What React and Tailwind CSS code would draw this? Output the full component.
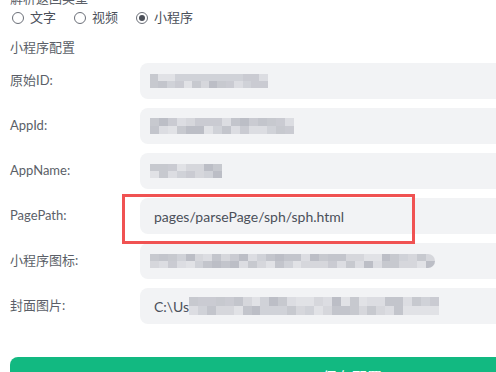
import React from "react";

function Blur({ w, rows = 2, seed = 1, cell = 9, h = 7, round = false }) {
  const shades = ["#c3c5cc", "#d0d2d8", "#dcdde2", "#e1e2e6", "#cacbd2", "#bcbec6", "#d6d7dc", "#c7c9cf"];
  const cols = Math.ceil(w / cell);
  const out = [];
  let s = seed * 7919 + 17;
  for (let r = 0; r < rows; r++) {
    const row = [];
    for (let c = 0; c < cols; c++) {
      s = (s * 1103515245 + 12345) & 0x7fffffff;
      row.push(shades[(s >> 16) % shades.length]);
    }
    out.push(row);
  }
  return (
    <div className={"flex flex-col overflow-hidden " + (round ? "rounded-r-full" : "")} style={{ width: w }}>
      {out.map((row, i) => (
        <div key={i} className="flex">
          {row.map((col, j) => (
            <div key={j} style={{ width: cell, height: h, background: col }} />
          ))}
        </div>
      ))}
    </div>
  );
}

function Row({ label, children }) {
  return (
    <div className="flex items-center h-[36px]">
      <div className="w-[130px] text-[13px] text-[#5b5f68]">{label}</div>
      <div className="flex-1 h-[36px] rounded-[8px] bg-[#f2f3f5] flex items-center pl-[10px] text-[14px] text-[#4b505a]">
        {children}
      </div>
    </div>
  );
}

function Radio({ checked, label }) {
  return (
    <div className="flex items-center gap-[6px]">
      <div className="w-[12px] h-[12px] rounded-full border border-[#6b6f78] flex items-center justify-center">
        {checked && <div className="w-[6px] h-[6px] rounded-full bg-[#4b4f58]" />}
      </div>
      <span>{label}</span>
    </div>
  );
}

export default function App() {
  return (
    <div
      className="w-[496px] h-[372px] overflow-hidden bg-white relative"
      style={{ fontFamily: "Lato, 'Noto Sans CJK SC', sans-serif" }}
    >
      <div className="w-[704px] px-[10px]">
        <div className="mt-[-10px] h-[16px] leading-[16px] text-[13px] text-[#5b5f68]">解析返回类型</div>
        <div className="mt-[2px] h-[20px] flex items-center gap-[18px] text-[13px] text-[#4b505a] pl-[2px]">
          <Radio label="文字" />
          <Radio label="视频" />
          <Radio checked label="小程序" />
        </div>
        <div className="mt-[9px] h-[20px] leading-[20px] text-[13px] text-[#5b5f68]">小程序配置</div>
        <div className="mt-[6px] flex flex-col gap-[9px]">
          <Row label="原始ID:">
            <Blur w={118} seed={3} />
          </Row>
          <Row label="AppId:">
            <Blur w={144} seed={7} h={8} />
          </Row>
          <Row label="AppName:">
            <Blur w={72} seed={11} />
          </Row>
          <Row label="PagePath:">
            <span className="pl-[4px]">pages/parsePage/sph/sph.html</span>
          </Row>
          <Row label="小程序图标:">
            <Blur w={285} seed={5} round />
          </Row>
          <Row label="封面图片:">
            <span className="pl-[4px]">C:\Us</span>
            <Blur w={250} seed={13} h={9} />
          </Row>
        </div>
        <div className="mt-[33px] h-[40px] rounded-[8px] bg-[#12b981] flex items-center justify-center text-white text-[15px]">
          保存配置
        </div>
      </div>
      <div className="absolute left-[122px] top-[194px] w-[293px] h-[50px] border-[3px] border-[#f05252]" />
    </div>
  );
}
